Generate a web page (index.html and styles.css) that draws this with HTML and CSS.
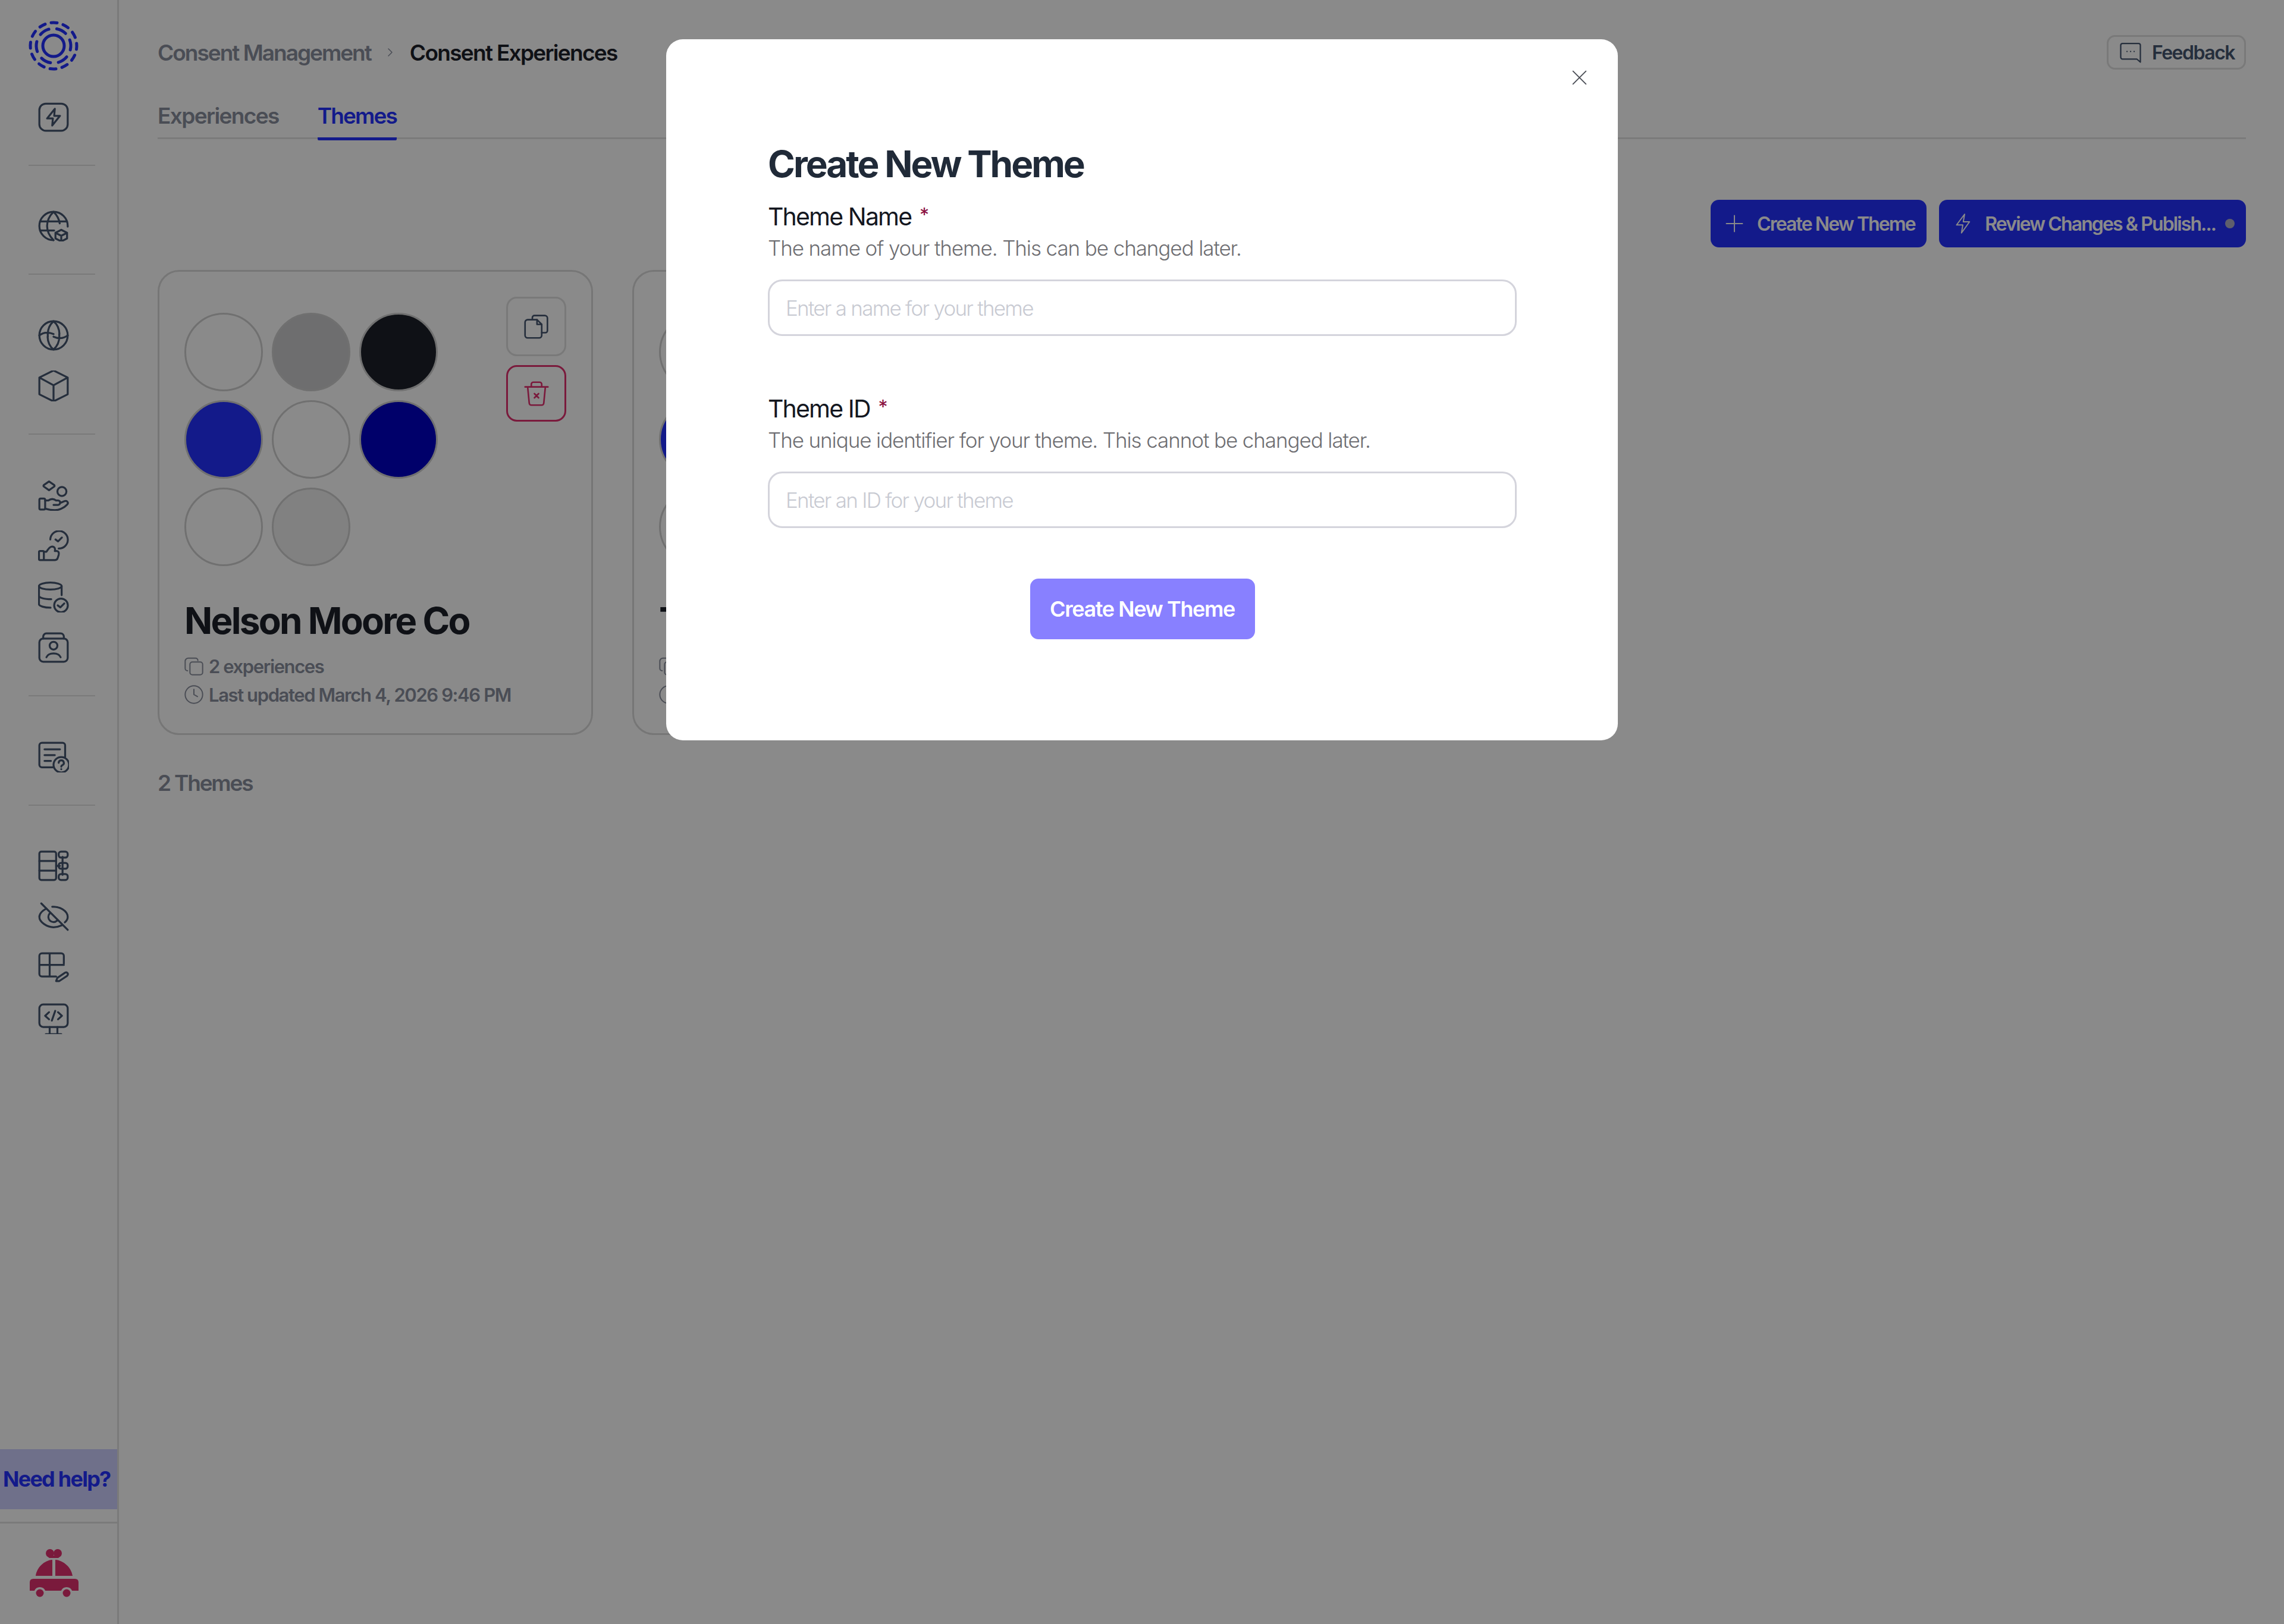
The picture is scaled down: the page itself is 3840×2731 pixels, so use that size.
FILE: index.html
```html
<!DOCTYPE html>
<html lang="en">
<head>
  <meta charset="UTF-8" />
  <title>Consent Experiences</title>
  <link rel="stylesheet" href="styles.css">
</head>
<body>
  <div class="app">
    <nav class="sidebar">
      <div class="nav-group nav-top">
        <svg class="logo" viewBox="0 0 84 84">
          <circle cx="42" cy="42" r="18"/>
          <circle cx="42" cy="42" r="29" stroke-dasharray="17 13.4" transform="rotate(-20 42 42)"/>
          <circle cx="42" cy="42" r="39" stroke-dasharray="10 10.4" transform="rotate(-6 42 42)"/>
        </svg>
        <div class="nav-item">
          <svg class="icon" viewBox="0 0 24 24"><rect x="1" y="1.500" width="22" height="21" rx="5"/><path d="M13 5.500 7 13h4.500l-.5 5.500 6-7.500h-4.500z"/></svg>
        </div>
      </div>
      <div class="nav-group">
        <div class="nav-item">
          <svg class="icon" viewBox="0 0 24 24"><path d="M23 12.500V12A11 11 0 1 0 12 23"/><path d="M12 1C8.500 4.500 7 8 7 12s1.500 7.500 5 11M12 1c2.800 2.800 4.300 5.600 4.800 9M1.500 8.500h21M1.500 15.500h11"/><path d="m18 15 4.500 2.300v4.400L18 24l-4.500-2.300v-4.400zM13.500 17.300 18 19.600l4.500-2.300M18 19.600V24"/></svg>
        </div>
      </div>
      <div class="nav-group">
        <div class="nav-item">
          <svg class="icon" viewBox="0 0 24 24"><circle cx="12" cy="12" r="11"/><path d="M7.600 13c-.5-5 1-9 4.400-12 3 2.500 4.500 6 4.600 10M16.400 11c.5 5-1 9-4.400 12-3-2.500-4.500-6-4.600-10M1 12c3-2.300 7-2.800 11-1M23 12c-3 2.300-7 2.800-11 1"/></svg>
        </div>
        <div class="nav-item">
          <svg class="icon" viewBox="0 0 24 24"><path d="M12 0 23 5.500v13L12 24 1 18.500v-13zM1 5.500l11 6 11-6M12 11.500V24"/></svg>
        </div>
      </div>
      <div class="nav-group">
        <div class="nav-item">
          <svg class="icon" viewBox="0 0 24 24"><path d="M8.500 1.200 12.500 4c.4.3.4.9 0 1.200L8.500 8 4.500 5.200c-.4-.3-.4-.9 0-1.200z"/><circle cx="18.500" cy="9" r="3.500"/><rect x="1" y="14.500" width="4.500" height="8.500" rx="1"/><path d="M5.500 16H8c2-1.500 4-1.500 6 0h1.500a1.700 1.700 0 0 1 0 3.400H12M17 18l3.500-1.500c2-.8 3.500 1.300 2 2.700C20 22 16 23.500 13 23.500c-3 0-5-.5-7.500-1.200"/></svg>
        </div>
        <div class="nav-item">
          <svg class="icon" viewBox="0 0 24 24"><path d="M9.500 7A6.800 6.800 0 1 1 16 14"/><path d="m13.500 7 2 1.500 3-3"/><rect x=".7" y="16" width="3.800" height="7" rx=".8"/><path d="M4.500 16.500h2c1-1 2-4 4.500-4 2 0 2.500 2 2 3.500h1.500c1.300 0 2 1.200 1.500 3l-.8 2.500c-.3 1-1 1.500-2 1.500H4.500"/></svg>
        </div>
        <div class="nav-item">
          <svg class="icon" viewBox="0 0 24 24"><ellipse cx="9.500" cy="3.500" rx="8.800" ry="2.700"/><path d="M.7 3.500v14c0 1.500 4 2.700 9 2.800M.7 11c0 1.500 4 2.700 9.500 2.700M18.300 3.500v7"/><circle cx="17.800" cy="18.500" r="5.300"/><path d="m15.300 18.500 2 1.500 3-3"/></svg>
        </div>
        <div class="nav-item">
          <svg class="icon" viewBox="0 0 24 24"><rect x="1" y="5" width="22" height="18" rx="3"/><path d="M4 5V3.500C4 2.200 5 1 6.500 1h11C19 1 20 2.200 20 3.500V5"/><circle cx="12" cy="10.500" r="3"/><path d="M6.500 19.500c1-2.500 3-3 5.500-3s4.500.5 5.500 3"/></svg>
        </div>
      </div>
      <div class="nav-group">
        <div class="nav-item">
          <svg class="icon" viewBox="0 0 24 24"><path d="M11.500 20H3a2 2 0 0 1-2-2V3a2 2 0 0 1 2-2h16a2 2 0 0 1 2 2v9"/><path d="M5 6h12M5 10.500h8M5 15h5"/><circle cx="18" cy="18" r="6"/><path d="M16 16.500a2 2 0 1 1 2.800 1.900c-.5.200-.8.600-.8 1.100M18 21.400v.1"/></svg>
        </div>
      </div>
      <div class="nav-group">
        <div class="nav-item">
          <svg class="icon" viewBox="0 0 24 24"><rect x="1" y="1" width="13" height="22" rx="1.500"/><path d="M1 8.300h13M1 15.700h13M14 12h3M19 5v14"/><rect x="16" y="1" width="7" height="4.600" rx="1.800"/><rect x="16" y="9.700" width="7" height="4.600" rx="1.800"/><rect x="16" y="18.400" width="7" height="4.600" rx="1.800"/></svg>
        </div>
        <div class="nav-item">
          <svg class="icon" viewBox="0 0 24 24"><path d="M2.500 1.500 23 22"/><path d="M6.500 5.500C3.500 7 1 9.500 1 12c0 4 6 8 11 8 2.300 0 4.500-.6 6.500-1.500M11 4.100c5.500-.5 12 3.200 12 7.900 0 1.500-.8 3-2.200 4.200"/><path d="M9 9.300a4 4 0 0 0 5.700 5.600"/></svg>
        </div>
        <div class="nav-item">
          <svg class="icon" viewBox="0 0 24 24"><path d="M20 9V3a2 2 0 0 0-2-2H3a2 2 0 0 0-2 2v14a2 2 0 0 0 2 2h11M1 10h19M9 1v18"/><path d="m14 22.500 1-2.500 6-4c1.500-.8 3 1 1.500 2.500l-6 4z"/></svg>
        </div>
        <div class="nav-item">
          <svg class="icon" viewBox="0 0 24 24"><rect x="1" y="1" width="22" height="17.500" rx="3"/><path d="M9 24v-5.500M15 24v-5.500M6 24h12M8.500 7 5.500 9.800l3 2.700M15.500 7l3 2.800-3 2.700M13.300 6l-2.600 7.500"/></svg>
        </div>
      </div>
      <div class="sidebar-foot">
        <div class="help">Need help?</div>
        <div class="account">
          <svg class="car" viewBox="0 0 84 84">
            <circle cx="36" cy="8" r="7"/><circle cx="49" cy="8" r="7"/><path d="M30 12h25l-5 4H35z"/>
            <path d="M40 19v27H12C14 32 26 20 40 19zM45 19v27h29C72 32 59 20 45 19z"/>
            <path d="M8 51h70q6 0 6 6v14H73.200a10 10 0 0 0-18.400 0H28.200a10 10 0 0 0-18.400 0H2V57q0-6 6-6z"/>
            <circle cx="19" cy="75" r="6.500"/><circle cx="64" cy="75" r="6.500"/>
          </svg>
        </div>
      </div>
    </nav>

    <main class="main">
      <header class="topbar">
        <div class="breadcrumb">
          <span class="crumb">Consent Management</span>
          <svg class="crumb-arrow" viewBox="0 0 24 24"><path d="m9 6 6 6-6 6"/></svg>
          <span class="crumb-current">Consent Experiences</span>
        </div>
        <button class="feedback">
          <svg class="feedback-icon" viewBox="0 0 24 24"><path d="M19 19.500H3a2 2 0 0 1-2-2V4a2 2 0 0 1 2-2h18a2 2 0 0 1 2 2v19z"/><path d="M8 11h.1M12 11h.1M16 11h.1"/></svg>
          <span>Feedback</span>
        </button>
      </header>

      <div class="tabs">
        <span class="tab">Experiences</span>
        <span class="tab tab-active">Themes</span>
      </div>

      <div class="actions">
        <button class="primary">
          <svg class="btn-icon" viewBox="0 0 24 24"><path d="M12 3v18M3 12h18"/></svg>
          <span>Create New Theme</span>
        </button>
        <button class="primary">
          <svg class="btn-icon" viewBox="0 0 24 24"><path d="M14 1.500 5 13.500h7l-1.500 9 9-12.500h-7z"/></svg>
          <span>Review Changes &amp; Publish...</span>
          <i class="dot"></i>
        </button>
      </div>

      <div class="cards">
        <article class="card">
          <div class="card-top">
            <div class="swatches">
              <i class="swatch c-white"></i><i class="swatch c-grey"></i><i class="swatch c-ink"></i>
              <i class="swatch c-blue"></i><i class="swatch c-white"></i><i class="swatch c-navy"></i>
              <i class="swatch c-white"></i><i class="swatch c-light"></i>
            </div>
            <div class="card-actions">
              <button class="square">
                <svg class="square-icon" viewBox="0 0 24 24"><path d="M8 5V3.500A2 2 0 0 1 10 1.500h10A2.500 2.500 0 0 1 22.500 4v12a2 2 0 0 1-2 2H17"/><path d="M3.500 5.500h9l4.500 4.500v10.500a2.500 2.500 0 0 1-2.500 2.500h-11A2.500 2.500 0 0 1 1 20.500V8a2.500 2.500 0 0 1 2.500-2.500z"/><path d="M12.500 5.500V10H17"/></svg>
              </button>
              <button class="square square-danger">
                <svg class="square-icon" viewBox="0 0 24 24"><path d="M1 5.500h22M3.500 5.500 5 21a2 2 0 0 0 2 2h10a2 2 0 0 0 2-2l1.500-15.500M7 5.500V3a2 2 0 0 1 2-2h6a2 2 0 0 1 2 2v2.500M10 12l4 4M14 12l-4 4"/></svg>
              </button>
            </div>
          </div>
          <h3 class="card-title">Nelson Moore Co</h3>
          <p class="meta">
            <svg class="meta-icon" viewBox="0 0 24 24"><path d="M4 18a3 3 0 0 1-3-3V6a4 4 0 0 1 4-4h9a3 3 0 0 1 3 3"/><rect x="7" y="7" width="16" height="16" rx="3"/></svg>
            <span>2 experiences</span>
          </p>
          <p class="meta">
            <svg class="meta-icon" viewBox="0 0 24 24"><circle cx="12" cy="12" r="11"/><path d="M12 5.500V12l4.500 2.500"/></svg>
            <span>Last updated March 4, 2026 9:46 PM</span>
          </p>
        </article>

        <article class="card">
          <div class="card-top">
            <div class="swatches">
              <i class="swatch c-white"></i><i class="swatch c-grey"></i><i class="swatch c-ink"></i>
              <i class="swatch c-blue"></i><i class="swatch c-white"></i><i class="swatch c-navy"></i>
              <i class="swatch c-white"></i><i class="swatch c-light"></i>
            </div>
          </div>
          <h3 class="card-title">Theme</h3>
          <p class="meta">
            <svg class="meta-icon" viewBox="0 0 24 24"><path d="M4 18a3 3 0 0 1-3-3V6a4 4 0 0 1 4-4h9a3 3 0 0 1 3 3"/><rect x="7" y="7" width="16" height="16" rx="3"/></svg>
            <span>2 experiences</span>
          </p>
          <p class="meta">
            <svg class="meta-icon" viewBox="0 0 24 24"><circle cx="12" cy="12" r="11"/><path d="M12 5.500V12l4.500 2.500"/></svg>
            <span>Last updated</span>
          </p>
        </article>
      </div>

      <p class="count">2 Themes</p>
    </main>
  </div>

  <div class="backdrop">
    <section class="modal">
      <button class="close">
        <svg viewBox="0 0 24 24"><path d="m3 3 18 18M21 3 3 21"/></svg>
      </button>
      <h2 class="modal-title">Create New Theme</h2>
      <div class="field">
        <label class="field-label"><span>Theme Name</span> <span class="req">*</span></label>
        <p class="field-help">The name of your theme. This can be changed later.</p>
        <div class="input"><span>Enter a name for your theme</span></div>
      </div>
      <div class="field">
        <label class="field-label"><span>Theme ID</span> <span class="req">*</span></label>
        <p class="field-help">The unique identifier for your theme. This cannot be changed later.</p>
        <div class="input"><span>Enter an ID for your theme</span></div>
      </div>
      <div class="modal-foot">
        <button class="submit"><span>Create New Theme</span></button>
      </div>
    </section>
  </div>
</body>
</html>
```
FILE: styles.css
```css
* {
  box-sizing: border-box;
}
html, body {
  margin: 0;
  height: 100%;
}
body {
  font-family: Inter, "Liberation Sans", sans-serif;
  background: #fff;
  color: #1c2129;
}
button {
  font-family: inherit;
  cursor: pointer;
}
svg {
  display: block;
  fill: none;
  stroke: currentColor;
  stroke-width: 1.5;
  stroke-linecap: round;
  stroke-linejoin: round;
}

.app {
  display: flex;
  min-height: 100vh;
}

/* left rail */
.sidebar {
  width: 200px;
  flex: none;
  display: flex;
  flex-direction: column;
  border-right: 3px solid #e2e2e2;
  color: #455670;
}
.nav-group {
  margin: 0 37px 0 48px;
  padding: 59px 0 37px;
  border-bottom: 2px solid #e2e2e2;
  display: flex;
  flex-direction: column;
  width: 112px;
}
.nav-group:nth-child(6) {
  border-bottom: none;
}
.nav-top {
  padding-top: 35px;
}
.nav-item {
  width: 84px;
  height: 85.5px;
  display: flex;
  align-items: center;
  justify-content: center;
}
.logo {
  width: 84px;
  height: 84px;
  margin-bottom: 35px;
  stroke: #2430ff;
  stroke-width: 5;
}
.icon {
  width: 52px;
  height: 52px;
}
.sidebar-foot {
  margin-top: auto;
}
.help {
  background: #ced0ff;
  color: #2430ff;
  height: 101px;
  line-height: 101px;
  padding-left: 5px;
  font-size: 36px;
  font-weight: 700;
  white-space: nowrap;
  letter-spacing: -1.75px;
  margin-bottom: 21px;
}
.account {
  border-top: 3px solid #e2e2e2;
  padding: 42px 48px 43px;
}
.car {
  width: 84px;
  height: 84px;
  stroke: none;
  fill: #e2306f;
}

/* page */
.main {
  flex: 1;
  min-width: 0;
  padding: 59px 64px 0 65px;
}
.topbar {
  display: flex;
  justify-content: space-between;
  align-items: center;
  height: 58px;
}
.breadcrumb {
  display: flex;
  align-items: center;
  font-size: 37px;
  font-weight: 600;
}
.crumb {
  color: #8a8f9d;
  letter-spacing: -2px;
}
.crumb-current {
  color: #1c2129;
  letter-spacing: -1.7px;
}
.crumb-arrow {
  width: 24px;
  height: 24px;
  margin: 0 21px 0 20px;
  color: #8a8f9d;
}
.feedback {
  height: 58px;
  padding: 0 16px 0 19px;
  display: flex;
  align-items: center;
  gap: 18px;
  background: #fff;
  border: 3px solid #e0e0e0;
  border-radius: 14px;
  font-size: 32px;
  font-weight: 600;
  letter-spacing: -1.5px;
  color: #455670;
}
.feedback-icon {
  width: 36px;
  height: 36px;
}

.tabs {
  display: flex;
  gap: 65px;
  height: 60px;
  margin-top: 57px;
  border-bottom: 3px solid #e4e4e4;
  font-size: 37px;
  line-height: 42px;
  font-weight: 600;
  letter-spacing: -1.6px;
  color: #8a8f9d;
}
.tab {
  height: 62px;
}
.tab-active {
  color: #2430ff;
  letter-spacing: -1.9px;
  border-bottom: 5px solid #2430ff;
  border-radius: 0 0 2px 2px;
}

.actions {
  display: flex;
  justify-content: flex-end;
  gap: 21px;
  margin-top: 102px;
}
.primary {
  height: 80px;
  display: flex;
  align-items: center;
  gap: 19.5px;
  padding: 0 19px 0 22px;
  background: #2430ff;
  color: #fff;
  border: none;
  border-radius: 14px;
  font-size: 32px;
  font-weight: 600;
  letter-spacing: -1.9px;
  white-space: nowrap;
}
.btn-icon {
  width: 36px;
  height: 36px;
  stroke-width: 1.3;
}
.dot {
  width: 16px;
  height: 16px;
  border-radius: 50%;
  background: #b0b0c8;
  margin-left: -3.5px;
}

.cards {
  display: flex;
  gap: 66px;
  margin-top: 38px;
}
.card {
  width: 732px;
  height: 782px;
  padding: 42px 42px 0;
  border: 3px solid #dadada;
  border-radius: 36px;
}
.card-top {
  display: flex;
  justify-content: space-between;
  height: 507px;
}
.swatches {
  display: grid;
  grid-template-columns: repeat(3, 132px);
  grid-auto-rows: 132px;
  gap: 15px;
  width: 426px;
  height: 426px;
  margin-top: 27px;
}
.swatch {
  border-radius: 50%;
  border: 3px solid #d0d0d0;
}
.c-white { background: #fff; }
.c-grey { background: #cccccd; }
.c-ink { background: #1c2129; }
.c-blue { background: #2430ff; }
.c-navy { background: #0000c4; }
.c-light { background: #eeeeee; }
.card-actions {
  display: flex;
  flex-direction: column;
  gap: 15px;
}
.square {
  width: 101px;
  height: 100px;
  display: flex;
  align-items: center;
  justify-content: center;
  background: #fff;
  border: 3px solid #e0e0e0;
  border-radius: 18px;
  color: #455670;
}
.square-danger {
  height: 95px;
  border-color: #e2306f;
  color: #e2306f;
}
.square-icon {
  width: 42px;
  height: 42px;
}
.card-title {
  margin: 0;
  font-size: 62px;
  line-height: 76px;
  font-weight: 700;
  letter-spacing: -2.75px;
  color: #1c2129;
  white-space: nowrap;
}
.meta {
  display: flex;
  align-items: center;
  gap: 9px;
  height: 48px;
  margin: 0;
  font-size: 31px;
  font-weight: 600;
  letter-spacing: -1.4px;
  color: #8a8f9d;
  white-space: nowrap;
}
.meta:first-of-type {
  margin-top: 14px;
}
.meta-icon {
  width: 32px;
  height: 32px;
}
.count {
  margin: 58px 0 0;
  font-size: 37px;
  font-weight: 600;
  letter-spacing: -2.2px;
  color: #8a8f9d;
}

/* dialog */
.backdrop {
  position: fixed;
  inset: 0;
  background: rgba(0, 0, 0, 0.46);
  display: flex;
  justify-content: center;
  align-items: flex-start;
  padding-top: 66px;
}
.modal {
  position: relative;
  width: 1600px;
  height: 1179px;
  padding: 172px 170px 0 171px;
  background: #fff;
  border-radius: 28px;
}
.close {
  position: absolute;
  top: 50px;
  right: 50px;
  width: 29px;
  height: 29px;
  padding: 0;
  border: none;
  background: none;
  color: #4a4d55;
}
.modal-title {
  margin: 0 0 25px;
  font-size: 62px;
  line-height: 76px;
  font-weight: 700;
  letter-spacing: -2.95px;
  color: #202a38;
}
.field {
  margin-bottom: 97px;
}
.field-label {
  display: block;
  font-size: 41px;
  line-height: 50px;
  letter-spacing: -1.85px;
  color: #14171f;
}
.req {
  color: #8a0f3f;
  font-size: 32px;
  line-height: 1;
  vertical-align: 6px;
  margin-left: 4px;
}
.field-help {
  margin: 6px 0 31px;
  font-size: 35px;
  line-height: 44px;
  font-weight: 300;
  letter-spacing: -1.1px;
  color: #6e6e72;
}
.input {
  height: 95px;
  display: flex;
  align-items: center;
  padding-left: 27px;
  border: 3px solid #d4d4dc;
  border-radius: 24px;
  font-size: 35px;
  font-weight: 300;
  letter-spacing: -1.75px;
  color: #c8cad2;
}
.modal-foot {
  display: flex;
  justify-content: center;
  margin-top: -12px;
}
.submit {
  width: 378px;
  height: 102px;
  background: #8880ff;
  color: #fff;
  border: none;
  border-radius: 14px;
  font-size: 36px;
  font-weight: 600;
  letter-spacing: -1.4px;
  white-space: nowrap;
}
```
